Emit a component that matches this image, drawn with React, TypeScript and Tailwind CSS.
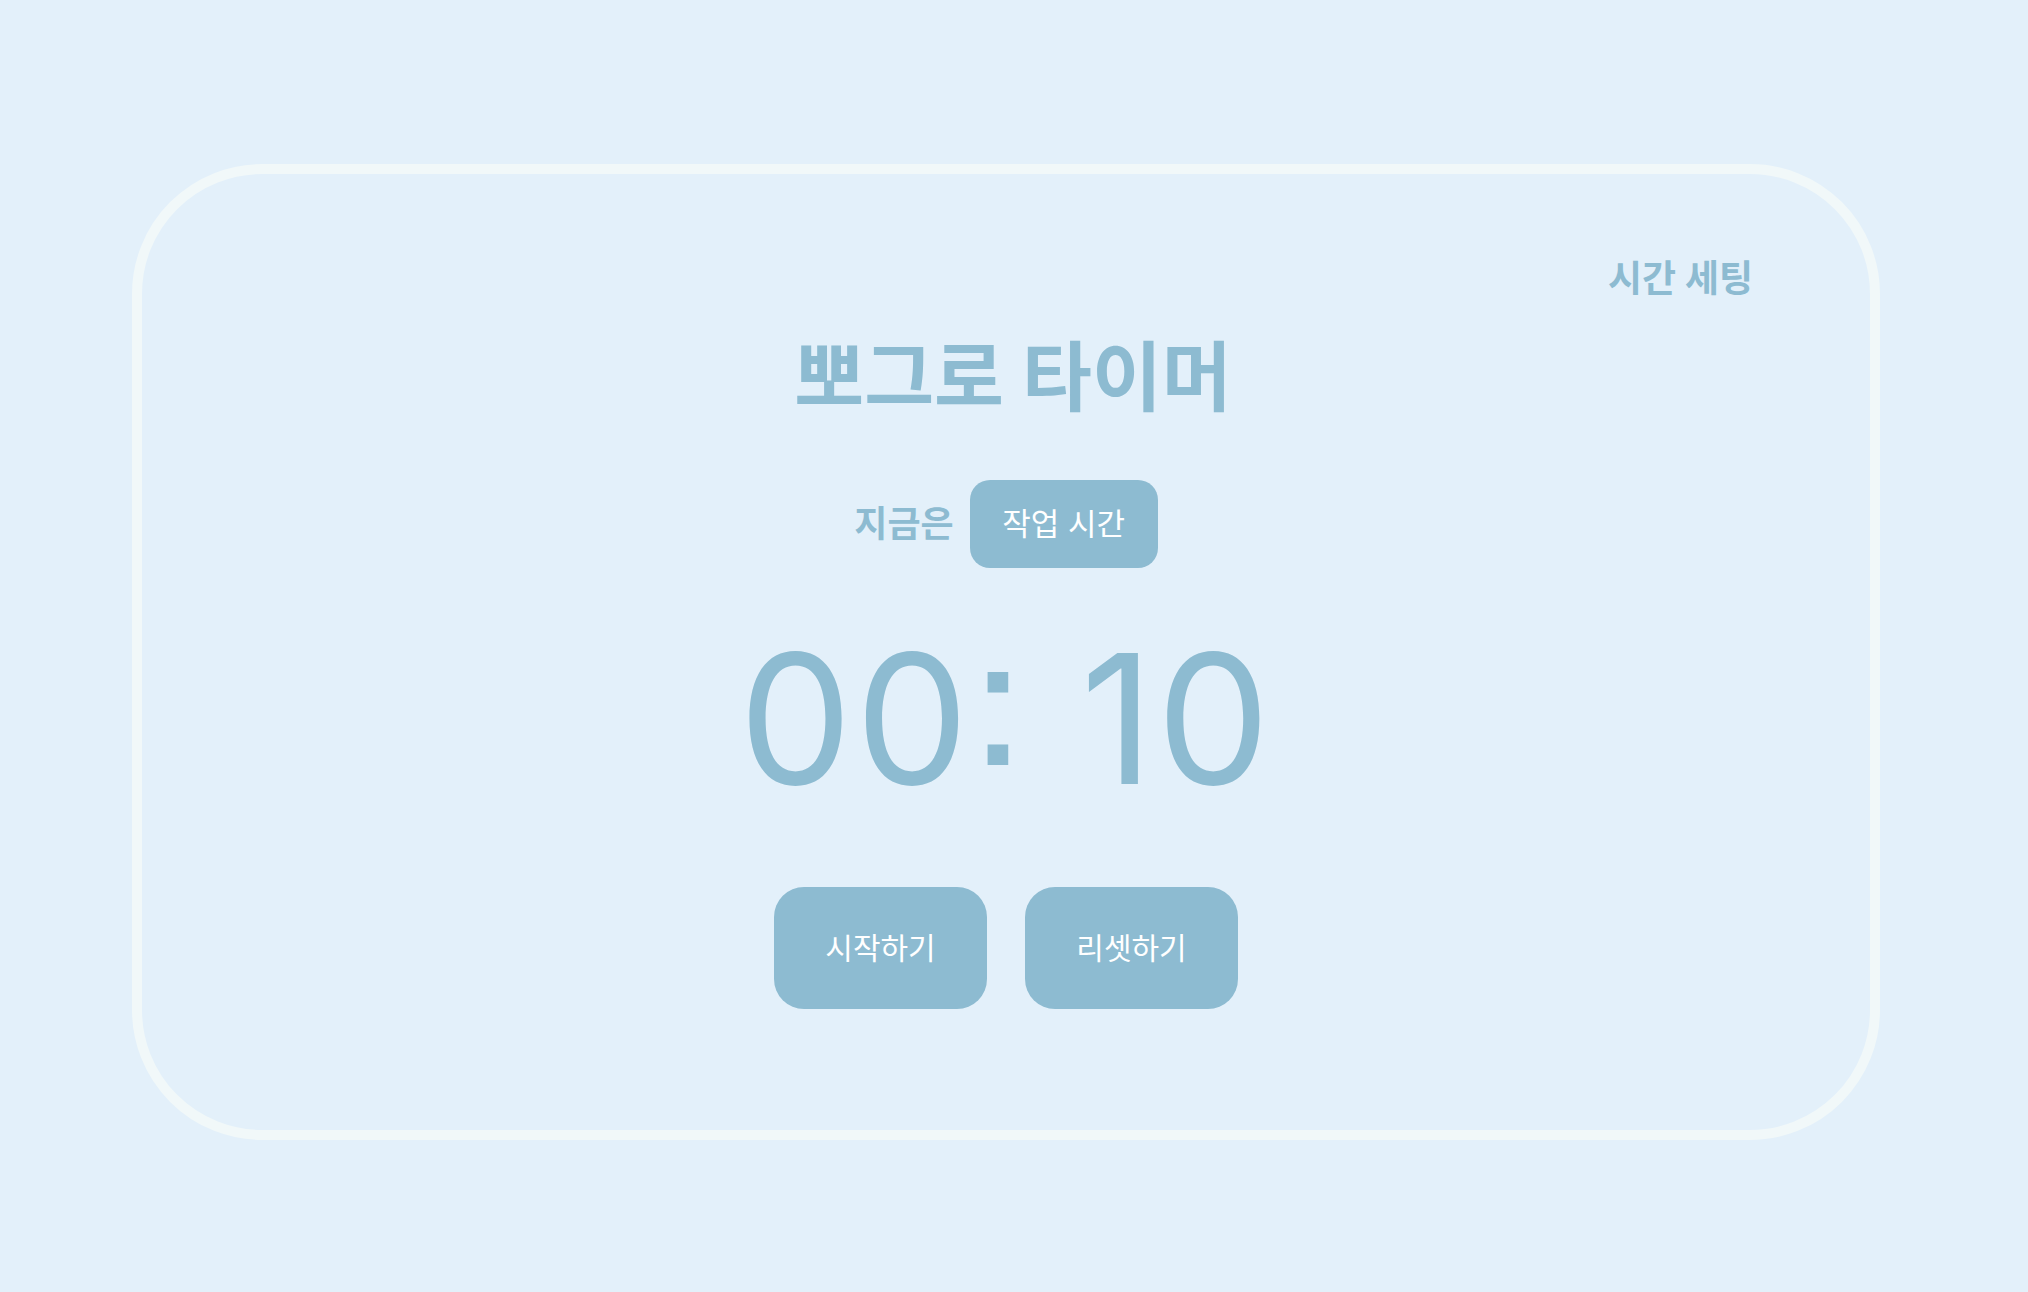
const font = { fontFamily: 'Inter, "Noto Sans CJK KR", sans-serif' };

export default function App() {
  return (
    <div className="min-h-screen w-full bg-[#e3f0fa] pt-[164px] pl-[132px]" style={font}>
      <div className="w-[1748px] h-[976px] rounded-[130px] border-[10px] border-[#f1f8f9] flex flex-col items-center">
        <div className="w-full flex justify-end pt-[86px] pr-[117px]">
          <button className="text-[37px] leading-[37px] font-bold text-[#8dbbd1]">시간 세팅</button>
        </div>

        <h1 className="mt-[42px] ml-[14px] text-[76px] leading-[76px] font-bold text-[#8dbbd1]">뽀그로 타이머</h1>

        <div className="mt-[65px] flex items-center gap-[16px]">
          <span className="text-[36px] leading-[36px] font-bold text-[#8dbbd1]">지금은</span>
          <div className="w-[188px] h-[88px] rounded-[20px] bg-[#8dbbd1] flex items-center justify-center text-[31px] text-white">
            작업 시간
          </div>
        </div>

        <div className="mt-[61px] text-[180px] leading-[180px] tracking-[3px] [font-feature-settings:'ss07','case'] text-[#8dbbd1]">
          00: 10
        </div>

        <div className="mt-[78px] flex gap-[38px]">
          <button className="w-[213px] h-[122px] rounded-[30px] bg-[#8dbbd1] text-[30px] text-white">시작하기</button>
          <button className="w-[213px] h-[122px] rounded-[30px] bg-[#8dbbd1] text-[30px] text-white">리셋하기</button>
        </div>
      </div>
    </div>
  );
}
